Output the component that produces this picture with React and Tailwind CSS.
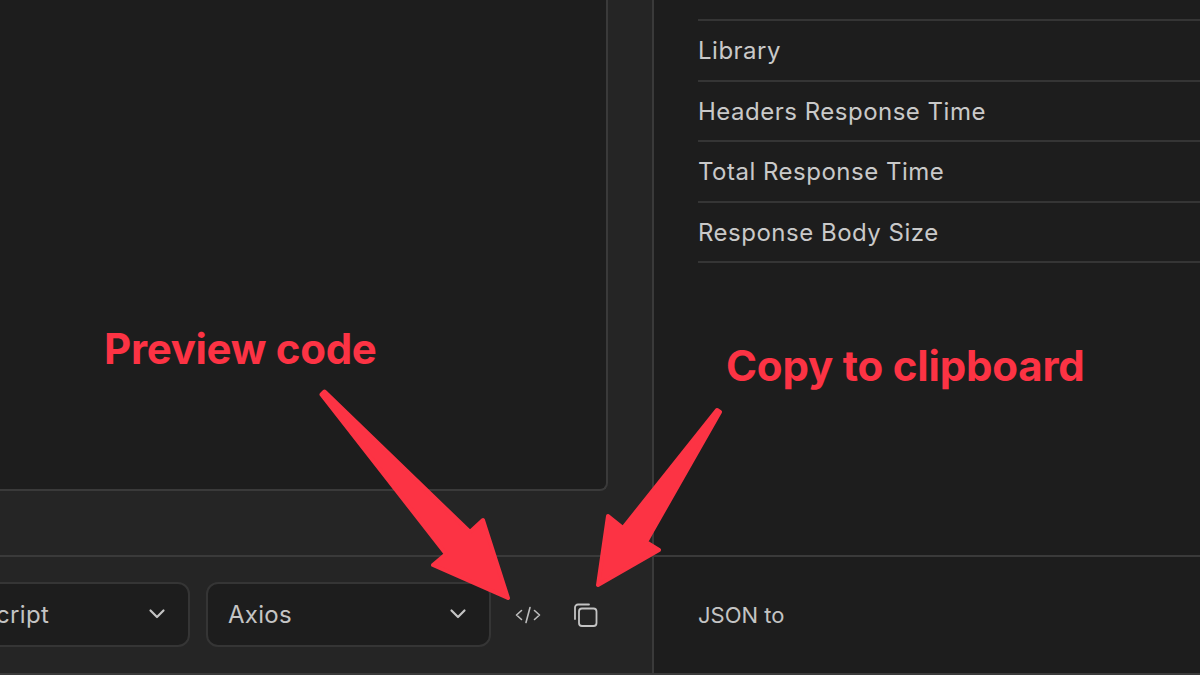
const ROWS = ['Library', 'Headers Response Time', 'Total Response Time', 'Response Body Size'];

function Chevron() {
  return (
    <svg className="shrink-0" width="20" height="20" viewBox="0 0 20 20" fill="none" stroke="#c4c4c4" strokeWidth="2.2" strokeLinecap="round" strokeLinejoin="round">
      <path d="M3.5 6.5 10 13l6.5-6.5" />
    </svg>
  );
}

function Select({ label, className }) {
  return (
    <div className={`h-[65px] mb-[2px] shrink-0 pl-5 pr-[21px] flex items-center justify-between rounded-xl border-2 border-[#353535] bg-[#1d1d1d] text-[24px] tracking-[0.3px] text-[#c4c4c4] ${className}`}>
      <span className="pt-[2px]">{label}</span>
      <Chevron />
    </div>
  );
}

export default function App() {
  return (
    <div className="relative w-[1200px] h-[675px] overflow-hidden flex border-b-2 border-[#3a3a3a] bg-[#1d1d1d] font-['Inter',sans-serif]">
      {/* Left column */}
      <div className="w-[654px] shrink-0 flex flex-col border-r-2 border-[#3a3a3a] bg-[#252525]">
        <div className="h-[555px] shrink-0 pr-[44px] pb-[64px]">
          <div className="h-full bg-[#1d1d1d] border-r-2 border-b-2 border-[#3a3a3a] rounded-br-lg" />
        </div>
        <div className="flex-1 flex items-center border-t-2 border-[#3a3a3a]">
          <Select label="TypeScript" className="w-[289px] -ml-[99px]" />
          <Select label="Axios" className="w-[285px] ml-4" />
          <svg className="ml-[23px] shrink-0" width="28" height="24" viewBox="0 0 28 24" fill="none" stroke="#bdbdbd" strokeWidth="1.6" strokeLinecap="round" strokeLinejoin="round">
            <path d="M7.5 7.5 2.5 12l5 4.5M20.500 7.500l5 4.500-5 4.500M16 4.500 12 19.500" />
          </svg>
          <svg className="ml-[31px] shrink-0" width="26" height="26" viewBox="0 0 26 26" fill="none" stroke="#c4c4c4" strokeWidth="1.8" strokeLinecap="round" strokeLinejoin="round">
            <path d="M2 17V5.500A3 3 0 0 1 5 2.500h11" />
            <rect x="6" y="6.500" width="17.500" height="17.500" rx="3" />
          </svg>
        </div>
      </div>

      {/* Right column */}
      <div className="flex-1 min-w-0 flex flex-col">
        <div className="h-[555px] shrink-0 pl-11 pt-[19px]">
          <div className="border-b-2 border-[#353535]" />
          {ROWS.map(r => (
            <div key={r} className="h-[60.5px] pt-[2px] flex items-center border-b-2 border-[#353535] text-[24px] text-[#c9c9c9] tracking-[0.5px]">
              {r}
            </div>
          ))}
        </div>
        <div className="flex-1 flex items-center pl-11 border-t-2 border-[#3a3a3a] text-[22px] text-[#c4c4c4]">
          JSON to
        </div>
      </div>

      {/* Annotations */}
      <div className="absolute left-[104px] top-[325px] text-[42px] leading-[48px] font-bold text-[#fc3344] tracking-[-0.3px]">Preview code</div>
      <div className="absolute left-[726px] top-[342px] text-[42px] leading-[48px] font-bold text-[#fc3344] tracking-[-0.2px]">Copy to clipboard</div>
      <svg className="absolute inset-0 pointer-events-none" width="1200" height="675" viewBox="0 0 1200 675" fill="#fc3344" stroke="#fc3344" strokeWidth="4" strokeLinejoin="round">
        <path d="M321.500 394.500 324.500 391.500 470 532 483 520 508 598 433 565 446 554Z" />
        <path d="M717 410 720 412 646 542 659 550 598 585 608 516 623 528Z" />
      </svg>
    </div>
  );
}
